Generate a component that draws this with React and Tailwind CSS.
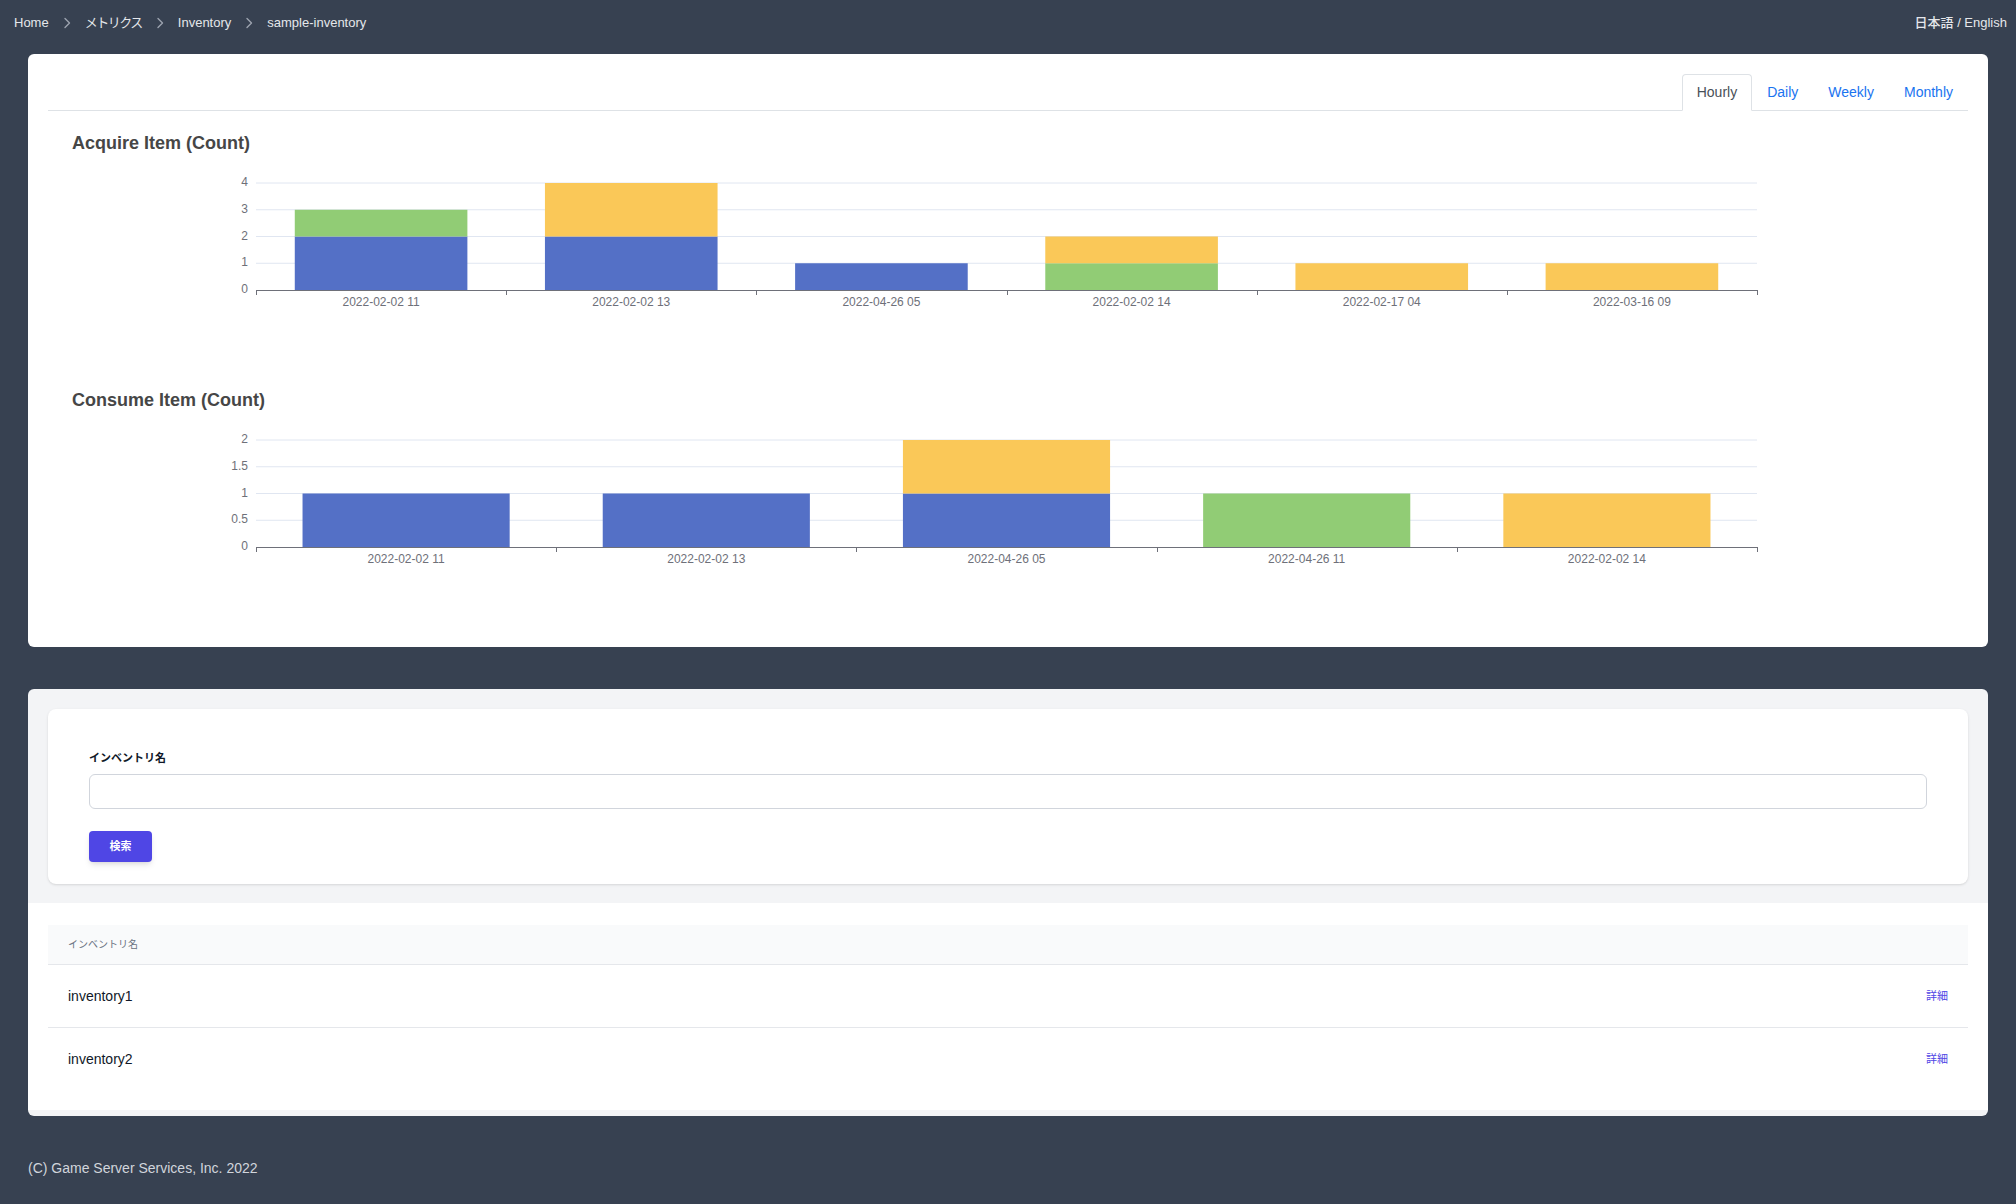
import React from "react";

const FONT = { fontFamily: '"Liberation Sans", "Noto Sans CJK JP", Arial, sans-serif' };

const BLUE = "#5470c6";
const GREEN = "#91cc75";
const YELLOW = "#fac858";

function Chevron() {
  return (
    <svg width="8" height="12" viewBox="0 0 8 12" className="mx-[14px] shrink-0">
      <path d="M2 1.5 L6.5 6 L2 10.5" fill="none" stroke="#9ca3af" strokeWidth="1.4" strokeLinecap="round" strokeLinejoin="round" />
    </svg>
  );
}

function BarChart({ title, categories, data, max, ticks }) {
  const W = 1919;
  const H = 213;
  const x0 = 208;
  const x1 = 1709;
  const yT = 28;
  const yB = 135;
  const cw = (x1 - x0) / categories.length;
  const bw = cw * 0.69;
  const scale = (yB - yT) / max;
  return (
    <div className="h-[257px]">
      <div className="pl-[24px] pt-[20px] h-[44px] text-[18px] leading-[24px] font-bold text-[#464646]">{title}</div>
      <svg width={W} height={H} viewBox={`0 0 ${W} ${H}`} className="block">
        {ticks.map((t) => {
          const y = yB - t * scale;
          return (
            <g key={t}>
              {t !== 0 && <line x1={x0} x2={x1} y1={y} y2={y} stroke="#E0E6F1" strokeWidth="1" />}
              <text x={200} y={y} textAnchor="end" dominantBaseline="middle" fontSize="12" fill="#6E7079" fontFamily='"Liberation Sans", Arial, sans-serif'>
                {t}
              </text>
            </g>
          );
        })}
        {data.map((segs, i) => {
          const cx = x0 + cw * i + cw / 2;
          let acc = 0;
          return (
            <g key={i}>
              {segs.map((s, j) => {
                const yTop = yB - (acc + s.v) * scale;
                const h = s.v * scale;
                acc += s.v;
                return <rect key={j} x={cx - bw / 2} y={yTop} width={bw} height={h} fill={s.c} />;
              })}
            </g>
          );
        })}
        <line x1={x0} x2={x1} y1={yB + 0.5} y2={yB + 0.5} stroke="#6E7079" strokeWidth="1" />
        {Array.from({ length: categories.length + 1 }).map((_, i) => {
          const x = Math.round(x0 + cw * i) + 0.5;
          return <line key={i} x1={x} x2={x} y1={yB} y2={yB + 5} stroke="#6E7079" strokeWidth="1" />;
        })}
        {categories.map((c, i) => (
          <text
            key={c + i}
            x={x0 + cw * i + cw / 2}
            y={yB + 12.5}
            textAnchor="middle"
            dominantBaseline="middle"
            fontSize="12"
            fill="#6E7079"
            fontFamily='"Liberation Sans", Arial, sans-serif'
          >
            {c}
          </text>
        ))}
      </svg>
    </div>
  );
}

export default function App() {
  const acquireCats = ["2022-02-02 11", "2022-02-02 13", "2022-04-26 05", "2022-02-02 14", "2022-02-17 04", "2022-03-16 09"];
  const acquireData = [
    [{ v: 2, c: BLUE }, { v: 1, c: GREEN }],
    [{ v: 2, c: BLUE }, { v: 2, c: YELLOW }],
    [{ v: 1, c: BLUE }],
    [{ v: 1, c: GREEN }, { v: 1, c: YELLOW }],
    [{ v: 1, c: YELLOW }],
    [{ v: 1, c: YELLOW }],
  ];
  const consumeCats = ["2022-02-02 11", "2022-02-02 13", "2022-04-26 05", "2022-04-26 11", "2022-02-02 14"];
  const consumeData = [
    [{ v: 1, c: BLUE }],
    [{ v: 1, c: BLUE }],
    [{ v: 1, c: BLUE }, { v: 1, c: YELLOW }],
    [{ v: 1, c: GREEN }],
    [{ v: 1, c: YELLOW }],
  ];

  return (
    <div className="min-h-screen bg-[#374151] flex flex-col" style={FONT}>
      <header className="h-[46px] flex items-center justify-between pl-[14px] pr-[9px] text-[13px] text-gray-200 font-medium">
        <nav className="flex items-center">
          <span>Home</span>
          <Chevron />
          <span className="tracking-[-1.5px] font-normal">メトリクス</span>
          <Chevron />
          <span>Inventory</span>
          <Chevron />
          <span>sample-inventory</span>
        </nav>
        <div>日本語 / English</div>
      </header>

      <main className="px-[28px] pt-[8px]">
        <section className="bg-white rounded-[6px] px-[20px] pt-[20px] pb-[22px]">
          <div className="flex justify-end border-b border-[#dee2e6] h-[37px]">
            <div className="h-[37px] px-[14px] flex items-center text-[14px] text-[#495057] bg-white border border-[#dee2e6] border-b-white rounded-t-[4px]">
              Hourly
            </div>
            <div className="h-[36px] px-[15px] flex items-center text-[14px] text-[#1a73f0]">Daily</div>
            <div className="h-[36px] px-[15px] flex items-center text-[14px] text-[#1a73f0]">Weekly</div>
            <div className="h-[36px] px-[15px] flex items-center text-[14px] text-[#1a73f0]">Monthly</div>
          </div>
          <BarChart title="Acquire Item (Count)" categories={acquireCats} data={acquireData} max={4} ticks={[0, 1, 2, 3, 4]} />
          <BarChart title="Consume Item (Count)" categories={consumeCats} data={consumeData} max={2} ticks={[0, 0.5, 1, 1.5, 2]} />
        </section>

        <section className="mt-[42px] bg-gray-100 rounded-[6px] overflow-hidden pb-[6px]">
          <div className="p-[20px] pb-[19px]">
            <div className="bg-white rounded-lg shadow-sm px-[41px] pt-[41px] pb-[22px]">
              <label className="block text-[11px] leading-[16px] font-bold text-gray-900">インベントリ名</label>
              <input className="mt-[8px] block w-full h-[35px] rounded-[6px] border border-gray-300 bg-white" />
              <button className="mt-[22px] w-[63px] h-[31px] rounded-[4px] bg-[#4f46e5] text-white text-[11px] font-bold shadow-md">
                検索
              </button>
            </div>
          </div>
          <div className="bg-white pt-[22px] pb-[19px] px-[20px]">
            <div className="h-[40px] bg-gray-50 border-b border-gray-200 flex items-center px-[20px] text-[10px] text-gray-500">
              インベントリ名
            </div>
            <div className="divide-y divide-gray-200">
              {["inventory1", "inventory2"].map((n) => (
                <div key={n} className="h-[63px] flex items-center justify-between px-[20px]">
                  <span className="text-[14px] text-gray-900">{n}</span>
                  <span className="text-[11px] text-[#4f46e5]">詳細</span>
                </div>
              ))}
            </div>
          </div>
        </section>
      </main>

      <footer className="px-[28px] pt-[42px] pb-[26px] text-[14px] leading-[20px] text-gray-300">
        (C) Game Server Services, Inc. 2022
      </footer>
    </div>
  );
}
